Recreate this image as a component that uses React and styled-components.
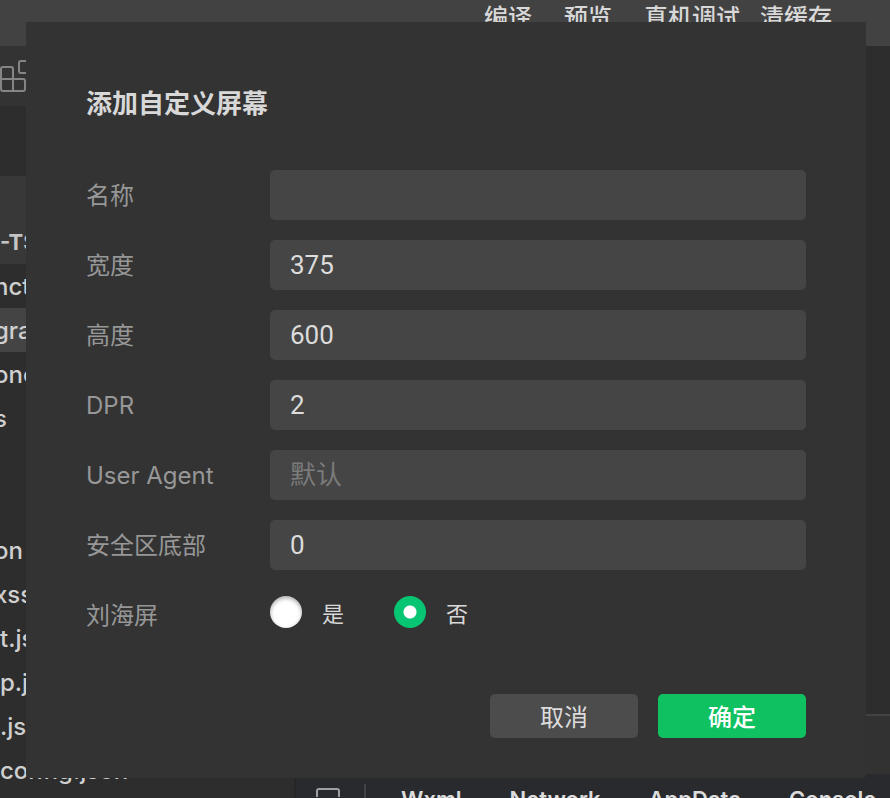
import React, { useState } from 'react';
import styled, { createGlobalStyle } from 'styled-components';

const GlobalStyle = createGlobalStyle`
  * {
    box-sizing: border-box;
  }

  body {
    margin: 0;
    background: #2d2d2d;
    color: #d8d8d8;
    font-family: Inter, 'Noto Sans CJK SC', sans-serif;
  }

  button {
    font-family: inherit;
  }
`;

const Window = styled.div`
  display: flex;
  flex-direction: column;
  height: 100vh;
  overflow: hidden;
`;

const TopBar = styled.header`
  flex: none;
  display: flex;
  justify-content: flex-end;
  align-items: flex-start;
  height: 46px;
  padding-right: 58px;
  background: #424242;
`;

const TopAction = styled.button`
  margin-left: ${props => props.$wide ? '32px' : '20px'};
  padding: 0;
  border: none;
  background: none;
  color: #d8d8d8;
  font-size: 24px;
  font-weight: 500;
  line-height: 36px;
  white-space: nowrap;
`;

const Workspace = styled.div`
  flex: 1;
  display: flex;
  min-height: 0;
`;

const Sidebar = styled.aside`
  flex: none;
  width: 296px;
  overflow: hidden;
  border-right: 2px solid #272727;
`;

const SidebarTools = styled.div`
  display: flex;
  align-items: center;
  height: 60px;
  background: #333;
`;

const ProjectHeader = styled.div`
  display: flex;
  align-items: flex-end;
  height: 88px;
  margin-top: 70px;
  background: #383838;
  color: #c4c4c4;
  font-size: 22px;
  font-weight: 700;
  line-height: 44px;
`;

const FileList = styled.ul`
  margin: 0;
  padding: 0;
  list-style: none;
`;

const FileItem = styled.li`
  height: 44px;
  text-indent: ${props => props.$clipped ? '-6px' : '0'};
  background: ${props => props.$selected ? '#444' : 'transparent'};
  color: #cfcfcf;
  font-size: 24px;
  font-weight: 500;
  line-height: 46px;
  white-space: nowrap;
`;

const Main = styled.main`
  flex: 1;
  display: flex;
  flex-direction: column;
  min-width: 0;
`;

const Preview = styled.div`
  flex: 1;
`;

const StatusBar = styled.div`
  height: 60px;
  border-top: 2px solid #424242;
  background: #323232;
`;

const DevTools = styled.nav`
  display: flex;
  align-items: flex-start;
  height: 24px;
  padding: 10px 0 0 20px;
  overflow: hidden;
  background: #292a2e;

  svg {
    flex: none;
  }
`;

const Divider = styled.span`
  flex: none;
  width: 2px;
  height: 24px;
  margin: 0 35px 0 24px;
  background: #414246;
`;

const DevTab = styled.a`
  margin-right: 48px;
  color: #dcdcdc;
  font-size: 22px;
  font-weight: 600;
  line-height: 30px;
  text-decoration: none;
`;

const Overlay = styled.div`
  position: fixed;
  inset: 0;
  padding: 22px 24px 20px 26px;
`;

const Dialog = styled.form`
  padding: 62px 60px 40px;
  border-radius: 0 0 4px 4px;
  background: #333;
`;

const Title = styled.h1`
  margin: 0 0 46px;
  font-size: 26px;
  font-weight: 700;
  line-height: 40px;
`;

const Fields = styled.div`
  display: grid;
  gap: 20px;
`;

const Field = styled.div`
  display: grid;
  grid-template-columns: 184px 1fr;
  align-items: center;
`;

const Label = styled.label`
  padding-top: 2px;
  color: #979797;
  font-size: 24px;
  line-height: 48px;
`;

const TextInput = styled.input`
  width: 100%;
  height: 50px;
  padding: 0 20px;
  border: none;
  border-radius: 5px;
  outline: none;
  background: #454545;
  color: #dcdcdc;
  font-family: Roboto, 'Noto Sans CJK SC', sans-serif;
  font-size: 26px;

  &::placeholder {
    color: #7b7b7b;
    opacity: 1;
  }
`;

const RadioGroup = styled.div`
  display: flex;
  gap: 50px;
  height: 44px;
  align-self: start;
`;

const RadioLabel = styled.label`
  display: flex;
  align-items: center;
  gap: 20px;
`;

const RadioText = styled.span`
  padding-top: 4px;
  font-size: 22px;
  line-height: 40px;
`;

const Radio = styled.input`
  appearance: none;
  width: 32px;
  height: 32px;
  margin: 0;
  border-radius: 50%;
  background: #fff;
  box-shadow: inset 0 2px 4px rgba(0, 0, 0, 0.35);

  &:checked {
    background: radial-gradient(circle, #fff 6px, #07c573 7px);
    box-shadow: none;
  }
`;

const Actions = styled.div`
  display: flex;
  justify-content: flex-end;
  gap: 20px;
  margin-top: 54px;
`;

const Button = styled.button`
  width: 148px;
  height: 44px;
  padding: 4px 0 0;
  border: none;
  border-radius: 5px;
  background: ${props => props.$primary ? '#0fc160' : '#4c4c4c'};
  color: ${props => props.$primary ? '#fff' : '#dcdcdc'};
  font-size: 24px;
  font-weight: ${props => props.$primary ? '500' : '400'};
  line-height: 40px;
`;

const fields = [
  { id: 'name', label: '名称', value: '' },
  { id: 'width', label: '宽度', value: '375' },
  { id: 'height', label: '高度', value: '600' },
  { id: 'dpr', label: 'DPR', value: '2' },
  { id: 'userAgent', label: 'User Agent', value: '', placeholder: '默认' },
  { id: 'safeArea', label: '安全区底部', value: '0' },
];

const files = [
  { name: 'nctions', clipped: true },
  { name: 'gram', clipped: true, selected: true },
  { name: 'onents', clipped: true },
  { name: 's', clipped: true },
  { name: '' },
  { name: '' },
  { name: 'on', clipped: true },
  { name: 'xss', clipped: true },
  { name: 't.json' },
  { name: 'p.js' },
  { name: '.js' },
  { name: 'config.json' },
];

const BlocksIcon = () => (
  <svg width="32" height="32" viewBox="0 0 32 32" fill="none" stroke="#858585" strokeWidth="2" aria-hidden="true">
    <path d="M13 19V9a2 2 0 0 0-2-2H3a2 2 0 0 0-2 2v20a2 2 0 0 0 2 2h20a2 2 0 0 0 2-2v-8a2 2 0 0 0-2-2H1M13 19v12" />
    <rect x="19" y="1" width="12" height="12" rx="2" />
  </svg>
);

const InspectIcon = () => (
  <svg width="24" height="24" viewBox="0 0 24 24" fill="none" stroke="#a0a0a4" strokeWidth="2" aria-hidden="true">
    <path d="M1 13V7a2 2 0 0 1 2-2h18a2 2 0 0 1 2 2v6" />
  </svg>
);

const App = () => {
  const [values, setValues] = useState(
    Object.fromEntries(fields.map(field => [field.id, field.value]))
  );
  const [notch, setNotch] = useState('no');

  const handleChange = (e) => {
    setValues({ ...values, [e.target.name]: e.target.value });
  };

  return (
    <>
      <GlobalStyle />
      <Window>
        <TopBar>
          <TopAction>编译</TopAction>
          <TopAction $wide>预览</TopAction>
          <TopAction $wide>真机调试</TopAction>
          <TopAction>清缓存</TopAction>
        </TopBar>
        <Workspace>
          <Sidebar>
            <SidebarTools><BlocksIcon /></SidebarTools>
            <ProjectHeader>-TS</ProjectHeader>
            <FileList>
              {files.map((file, index) => (
                <FileItem key={index} $clipped={file.clipped} $selected={file.selected}>
                  {file.name}
                </FileItem>
              ))}
            </FileList>
          </Sidebar>
          <Main>
            <Preview />
            <StatusBar />
            <DevTools>
              <InspectIcon />
              <Divider />
              <DevTab href="#wxml">Wxml</DevTab>
              <DevTab href="#network">Network</DevTab>
              <DevTab href="#appdata">AppData</DevTab>
              <DevTab href="#console">Console</DevTab>
            </DevTools>
          </Main>
        </Workspace>
      </Window>

      <Overlay>
        <Dialog onSubmit={(e) => e.preventDefault()}>
          <Title>添加自定义屏幕</Title>
          <Fields>
            {fields.map(field => (
              <Field key={field.id}>
                <Label htmlFor={field.id}>{field.label}</Label>
                <TextInput
                  id={field.id}
                  name={field.id}
                  value={values[field.id]}
                  placeholder={field.placeholder}
                  onChange={handleChange}
                />
              </Field>
            ))}
            <Field role="radiogroup" aria-labelledby="notch-label">
              <Label as="span" id="notch-label">刘海屏</Label>
              <RadioGroup>
                <RadioLabel>
                  <Radio type="radio" name="notch" checked={notch === 'yes'} onChange={() => setNotch('yes')} />
                  <RadioText>是</RadioText>
                </RadioLabel>
                <RadioLabel>
                  <Radio type="radio" name="notch" checked={notch === 'no'} onChange={() => setNotch('no')} />
                  <RadioText>否</RadioText>
                </RadioLabel>
              </RadioGroup>
            </Field>
          </Fields>
          <Actions>
            <Button type="button">取消</Button>
            <Button type="submit" $primary>确定</Button>
          </Actions>
        </Dialog>
      </Overlay>
    </>
  );
};

export default App;
